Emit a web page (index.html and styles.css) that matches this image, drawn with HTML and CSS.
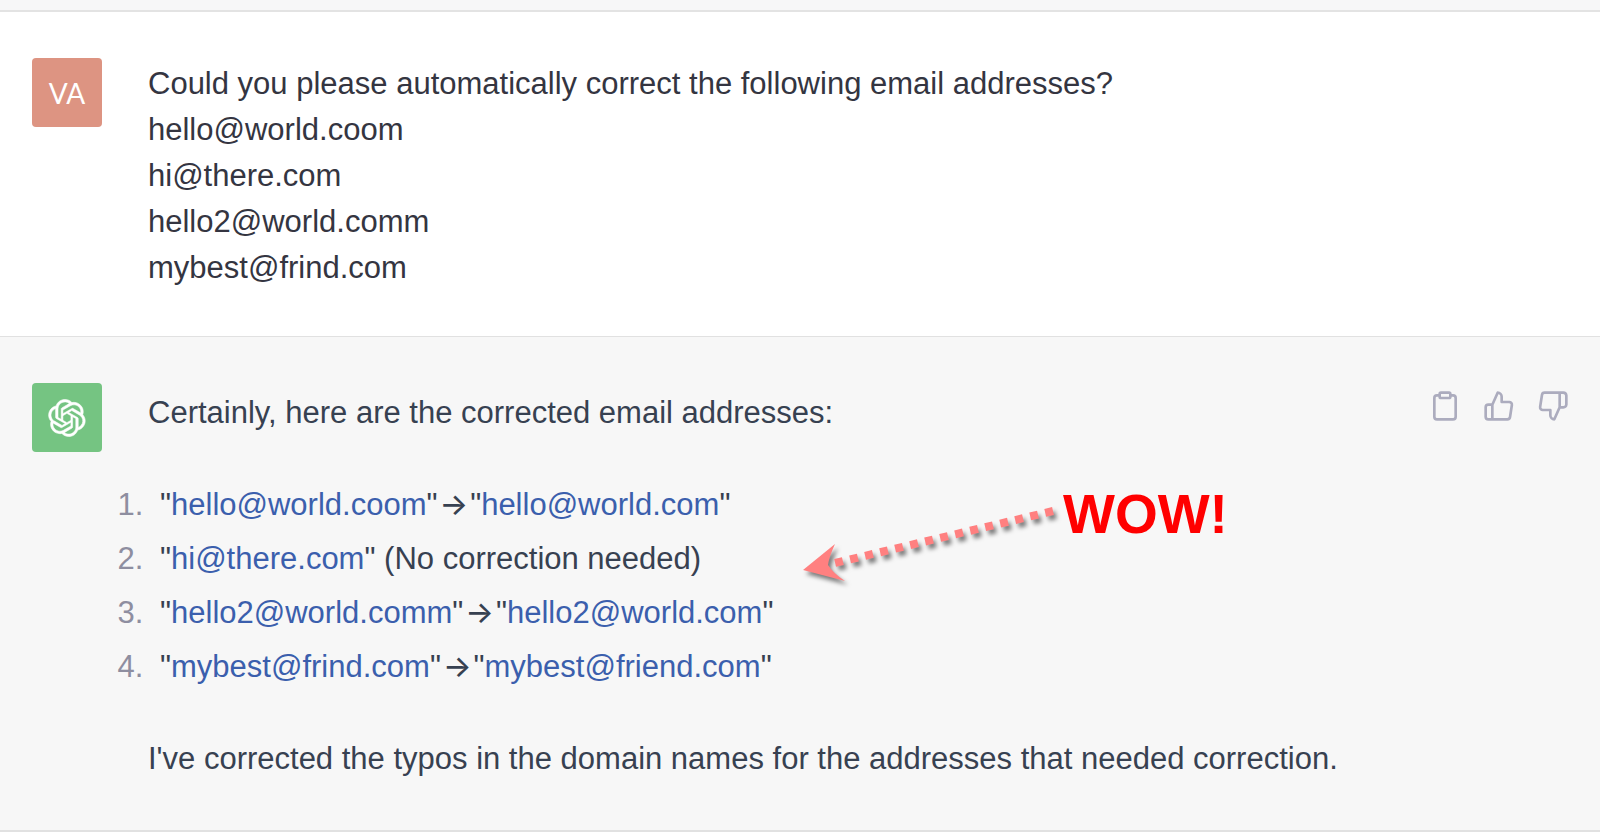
FILE: index.html
```html
<!DOCTYPE html>
<html lang="en">

<head>
    <meta charset="UTF-8">
    <meta name="viewport" content="width=device-width, initial-scale=1.0">
    <title>Chat - Email correction</title>
    <link rel="stylesheet" href="styles.css">
</head>

<body>
    <!-- End of the previous message -->
    <div class="previous"></div>

    <main>
        <!-- User message -->
        <article class="message user">
            <div class="avatar avatar-user">VA</div>
            <div class="content">
                <p>Could you please automatically correct the following email addresses?<br>
                    hello@world.coom<br>
                    hi@there.com<br>
                    hello2@world.comm<br>
                    mybest@frind.com</p>
            </div>
        </article>

        <!-- Assistant message -->
        <article class="message assistant">
            <div class="avatar avatar-bot">
                <svg viewBox="0 0 41 41" fill="none" aria-hidden="true">
                    <path fill="currentColor" stroke="currentColor" stroke-width="0.6" d="M37.5324 16.8707C37.9808 15.5241 38.1363 14.0974 37.9886 12.6859C37.8409 11.2744 37.3934 9.91076 36.676 8.68622C35.6126 6.83404 33.9882 5.3676 32.0373 4.4985C30.0864 3.62941 27.9098 3.40259 25.8215 3.85078C24.8796 2.7893 23.7219 1.94125 22.4257 1.36341C21.1295 0.785575 19.7249 0.491269 18.3058 0.500197C16.1708 0.495044 14.0893 1.16803 12.3614 2.42214C10.6335 3.67624 9.34853 5.44666 8.6917 7.47815C7.30085 7.76286 5.98686 8.3414 4.8377 9.17505C3.68854 10.0087 2.73073 11.0782 2.02839 12.312C0.956464 14.1591 0.498905 16.2988 0.721698 18.4228C0.944492 20.5467 1.83612 22.5449 3.268 24.1293C2.81966 25.4759 2.66413 26.9026 2.81182 28.3141C2.95951 29.7256 3.40701 31.0892 4.12437 32.3138C5.18791 34.1659 6.8123 35.6322 8.76321 36.5013C10.7141 37.3704 12.8907 37.5973 14.9789 37.1492C15.9208 38.2107 17.0786 39.0587 18.3747 39.6366C19.6709 40.2144 21.0755 40.5087 22.4946 40.4998C24.6307 40.5054 26.7133 39.8321 28.4418 38.5772C30.1704 37.3223 31.4556 35.5506 32.1119 33.5179C33.5027 33.2332 34.8167 32.6547 35.9659 31.821C37.115 30.9874 38.0728 29.9178 38.7752 28.684C39.8458 26.8371 40.3023 24.6979 40.0789 22.5748C39.8556 20.4517 38.9639 18.4544 37.5324 16.8707ZM22.4978 37.8849C20.7443 37.8874 19.0459 37.2733 17.6994 36.1501C17.7601 36.117 17.8666 36.0586 17.936 36.0161L25.9004 31.4156C26.1003 31.3019 26.2663 31.137 26.3813 30.9378C26.4964 30.7386 26.5563 30.5124 26.5549 30.2825V19.0542L29.9213 20.998C29.9389 21.0068 29.9541 21.0198 29.9656 21.0359C29.977 21.052 29.9842 21.0707 29.9867 21.0902V30.3889C29.9842 32.375 29.1946 34.2791 27.7909 35.6841C26.3872 37.0892 24.4838 37.8806 22.4978 37.8849ZM6.39227 31.0064C5.51397 29.4888 5.19742 27.7107 5.49804 25.9832C5.55718 26.0187 5.66048 26.0818 5.73461 26.1244L13.699 30.7248C13.8975 30.8408 14.1233 30.902 14.3532 30.902C14.583 30.902 14.8088 30.8408 15.0073 30.7248L24.731 25.1103V28.9979C24.7321 29.0177 24.7283 29.0376 24.7199 29.0556C24.7115 29.0736 24.6988 29.0893 24.6829 29.1012L16.6317 33.7497C14.9096 34.7416 12.8643 35.0097 10.9447 34.4954C9.02506 33.9811 7.38785 32.7263 6.39227 31.0064ZM4.29707 13.6194C5.17156 12.0998 6.55279 10.9364 8.19885 10.3327C8.19885 10.4013 8.19491 10.5228 8.19491 10.6071V19.808C8.19351 20.0378 8.25334 20.2638 8.36823 20.4629C8.48312 20.6619 8.64893 20.8267 8.84863 20.9404L18.5723 26.5542L15.206 28.4979C15.1894 28.5089 15.1703 28.5155 15.1505 28.5173C15.1307 28.5191 15.1107 28.516 15.0924 28.5082L7.04046 23.8557C5.32135 22.8601 4.06716 21.2235 3.55289 19.3046C3.03862 17.3858 3.30624 15.3413 4.29707 13.6194ZM31.955 20.0556L22.2312 14.4411L25.5976 12.4981C25.6142 12.4872 25.6333 12.4805 25.6531 12.4787C25.6729 12.4769 25.6928 12.4801 25.7111 12.4879L33.7631 17.1364C34.9967 17.849 36.0017 18.8982 36.6606 20.1613C37.3194 21.4244 37.6047 22.849 37.4832 24.2684C37.3617 25.6878 36.8382 27.0432 35.9743 28.1759C35.1103 29.3086 33.9415 30.1717 32.6047 30.6641C32.6047 30.5947 32.6047 30.4733 32.6047 30.3889V21.188C32.6066 20.9586 32.5474 20.7328 32.4332 20.5338C32.319 20.3348 32.154 20.1698 31.955 20.0556ZM35.3055 15.0128C35.2464 14.9765 35.1431 14.9142 35.069 14.8717L27.1045 10.2712C26.906 10.1554 26.6803 10.0943 26.4504 10.0943C26.2206 10.0943 25.9948 10.1554 25.7963 10.2712L16.0726 15.8858V11.9982C16.0715 11.9783 16.0753 11.9585 16.0837 11.9405C16.0921 11.9225 16.1048 11.9068 16.1207 11.8949L24.1719 7.25025C25.4053 6.53903 26.8158 6.19376 28.2383 6.25482C29.6608 6.31589 31.0364 6.78077 32.2044 7.59508C33.3723 8.40939 34.2842 9.53945 34.8334 10.8531C35.3826 12.1667 35.5464 13.6095 35.3055 15.0128ZM14.2424 21.9419L10.8752 19.9981C10.8576 19.9893 10.8423 19.9763 10.8309 19.9602C10.8195 19.9441 10.8122 19.9254 10.8098 19.9058V10.6071C10.8107 9.18295 11.2173 7.78848 11.9819 6.58696C12.7466 5.38544 13.8377 4.42659 15.1275 3.82264C16.4173 3.21869 17.8524 2.99464 19.2649 3.1767C20.6775 3.35876 22.0089 3.93941 23.1034 4.85067C23.0427 4.88379 22.937 4.94215 22.8668 4.98473L14.9024 9.58517C14.7025 9.69878 14.5366 9.86356 14.4215 10.0626C14.3065 10.2616 14.2466 10.4877 14.2479 10.7175L14.2424 21.9419ZM16.071 17.9991L20.4018 15.4978L24.7325 17.9975V22.9985L20.4018 25.4983L16.071 22.9985V17.9991Z" />
                </svg>
            </div>
            <div class="content">
                <p>Certainly, here are the corrected email addresses:</p>
                <ol>
                    <li>"<a href="mailto:hello@world.coom">hello@world.coom</a>"<span class="arrow">→</span>"<a href="mailto:hello@world.com">hello@world.com</a>"</li>
                    <li>"<a href="mailto:hi@there.com">hi@there.com</a>" (No correction needed)</li>
                    <li>"<a href="mailto:hello2@world.comm">hello2@world.comm</a>"<span class="arrow">→</span>"<a href="mailto:hello2@world.com">hello2@world.com</a>"</li>
                    <li>"<a href="mailto:mybest@frind.com">mybest@frind.com</a>"<span class="arrow">→</span>"<a href="mailto:mybest@friend.com">mybest@friend.com</a>"</li>
                </ol>
                <p>I've corrected the typos in the domain names for the addresses that needed correction.</p>
            </div>

            <!-- Message actions -->
            <div class="actions">
                <button type="button" aria-label="Copy">
                    <svg viewBox="0 0 24 24"><path d="M16 4h2a2 2 0 0 1 2 2v14a2 2 0 0 1-2 2H6a2 2 0 0 1-2-2V6a2 2 0 0 1 2-2h2" /><rect x="8" y="2" width="8" height="4" rx="1" /></svg>
                </button>
                <button type="button" aria-label="Good response">
                    <svg viewBox="0 0 24 24"><path d="M14 9V5a3 3 0 0 0-3-3l-4 9v11h11.28a2 2 0 0 0 2-1.7l1.38-9a2 2 0 0 0-2-2.3zM7 22H4a2 2 0 0 1-2-2v-7a2 2 0 0 1 2-2h3" /></svg>
                </button>
                <button type="button" aria-label="Bad response">
                    <svg viewBox="0 0 24 24"><path d="M10 15v4a3 3 0 0 0 3 3l4-9V2H5.72a2 2 0 0 0-2 1.7l-1.38 9a2 2 0 0 0 2 2.3zm7-13h2.67A2.31 2.31 0 0 1 22 4v7a2.31 2.31 0 0 1-2.33 2H17" /></svg>
                </button>
            </div>

            <!-- Annotation over the answer -->
            <div class="note">
                <svg viewBox="0 0 260 90" aria-hidden="true">
                    <path class="note-head" d="M0 75L32 49Q26 62 25 70Q30 78 42 86Z" />
                    <path class="note-line" d="M250 16L32 68" />
                </svg>
                <strong>WOW!</strong>
            </div>
        </article>
    </main>
</body>

</html>
```

FILE: styles.css
```css
body {
    font-family: "Liberation Sans", Arial, sans-serif;
    font-size: 31px;
    line-height: 46px;
    color: #343541;
    background-color: #fff;
    margin: 0;
}

.previous {
    height: 10px;
    background-color: #f7f7f8;
    border-bottom: 2px solid #e3e3e3;
}

.message {
    display: flex;
    gap: 46px;
    position: relative;
    padding: 46px 32px;
}

.user {
    padding-bottom: 45px;
}

.assistant {
    color: #374151;
    background-color: #f7f7f7;
    border-top: 1px solid #e1e1e1;
    border-bottom: 2px solid #e1e1e1;
}

.avatar {
    display: flex;
    flex: none;
    align-items: center;
    justify-content: center;
    width: 70px;
    height: 69px;
    border-radius: 4px;
    color: #fff;
}

.avatar-user {
    background-color: #dd9482;
    font-family: Lato, sans-serif;
    font-size: 28px;
}

.avatar-bot {
    background-color: #75c482;
}

.avatar-bot svg {
    width: 38px;
    height: 38px;
}

.content {
    flex: 1;
    padding-top: 3px;
}

.assistant .content {
    padding: 7px 0 2px;
}

.content p {
    margin: 0;
}

.content ol {
    margin: 46px 0;
    padding: 0 0 0 4px;
}

.content li {
    padding-left: 8px;
    margin-bottom: 8px;
}

.content li:last-child {
    margin-bottom: 0;
}

.content li::marker {
    color: #8e8ea0;
}

.content a {
    color: #3b5fad;
    text-decoration: none;
}

.arrow {
    font-family: Inter, sans-serif;
    font-size: 30px;
    font-weight: 500;
    line-height: 1;
    margin: 0 2px;
}

.actions {
    position: absolute;
    top: 53px;
    right: 31px;
    display: flex;
    gap: 22px;
}

.actions button {
    display: flex;
    padding: 0;
    border: none;
    background: none;
    color: #acacbe;
    cursor: pointer;
}

.actions svg {
    width: 32px;
    height: 32px;
    fill: none;
    stroke: currentColor;
    stroke-width: 2;
    stroke-linecap: round;
    stroke-linejoin: round;
}

/* Dotted arrow with its label */
.note {
    position: absolute;
    top: 154px;
    left: 803px;
    display: flex;
}

.note svg {
    width: 260px;
    height: 90px;
    margin-top: 4px;
    overflow: visible;
    filter: drop-shadow(3px 4px 2px rgba(0, 0, 0, 0.5));
}

.note-line {
    fill: none;
    stroke: #ff8080;
    stroke-width: 8;
    stroke-dasharray: 8 7.43;
}

.note-head {
    fill: #ff8080;
}

.note strong {
    font-size: 55px;
    color: #f00;
}
```
